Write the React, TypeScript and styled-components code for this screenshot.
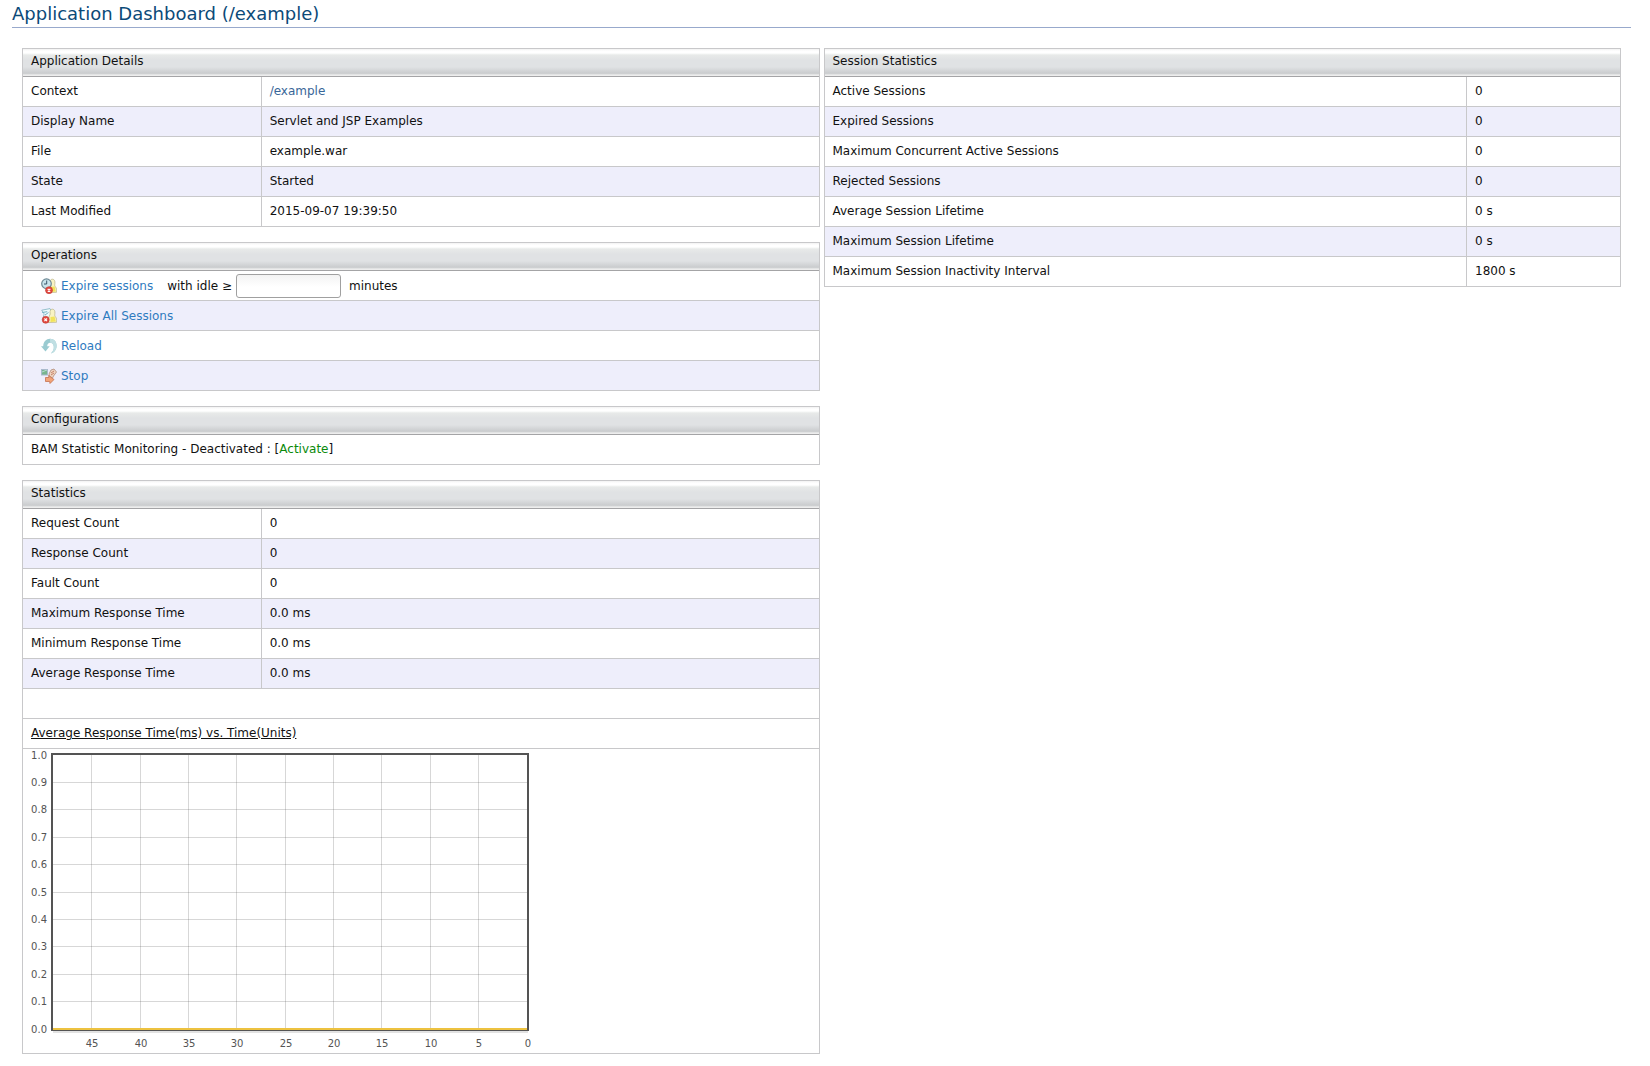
import React from "react";
import styled, { createGlobalStyle } from "styled-components";

const GlobalStyle = createGlobalStyle`
  body {
    margin: 0;
    background: #fff;
    color: #111;
    font-family: "DejaVu Sans", Verdana, sans-serif;
    font-size: 12px;
    line-height: 14px;
  }
`;

const Page = styled.main`
  padding: 0 19px 12px 12px;
`;

const Title = styled.h2`
  margin: 0;
  padding: 3px 0 2px;
  border-bottom: 1px solid #98a9cc;
  color: #0b4a78;
  font-size: 18px;
  font-weight: normal;
  line-height: 22px;
`;

const Columns = styled.div`
  display: grid;
  grid-template-columns: 1fr 1fr;
  gap: 4px;
  align-items: start;
  padding: 20px 10px 0;
`;

const Stack = styled.div`
  display: flex;
  flex-direction: column;
  gap: 15px;
`;

const Table = styled.table`
  width: 100%;
  border: 1px solid #c8c8ca;
  border-spacing: 0;
  table-layout: fixed;
`;

const Col = styled.col<{ $width?: string }>`
  width: ${(p) => p.$width ?? "auto"};
`;

const Head = styled.th`
  padding: 5px 8px 8px;
  border-bottom: 1px solid #a4a4a6;
  background: linear-gradient(
    #f2f2f2 0, #fff 2px, #fff 4px, #e8eae9 6px, #e0e2e4 11px,
    #e0e2e4 18px, #cbcdcf 24px, #d0d2d3 25px, #f4f4f4 26px, #e6e6e6 27px
  );
  font-weight: normal;
  text-align: left;
`;

const Row = styled.tr<{ $shaded?: boolean }>`
  background: ${(p) => (p.$shaded ? "#eeeefb" : "#fff")};

  &:last-child > td {
    border-bottom: 0;
  }
`;

const Cell = styled.td<{ $divided?: boolean }>`
  height: 14px;
  padding: 7px 8px 8px;
  border-bottom: 1px solid #c8c8ca;
  border-right: ${(p) => (p.$divided ? "1px solid #c8c8ca" : "0")};
`;

const ToolCell = styled(Cell)`
  height: 29px;
  padding: 0 18px;
`;

const ChartCell = styled(Cell)`
  padding: 0 8px;
`;

const Tools = styled.div`
  display: flex;
  align-items: center;
  gap: 14px;
`;

const IdleGroup = styled.div`
  display: flex;
  align-items: center;
  gap: 8px;
`;

const ToolLink = styled.a`
  display: flex;
  align-items: center;
  gap: 4px;
  color: #2f7bbf;
  text-decoration: none;
`;

const ContextLink = styled.a`
  color: #386698;
  text-decoration: none;
`;

const ActivateLink = styled.a`
  color: #0b8a0b;
  text-decoration: none;
`;

const IdleField = styled.label`
  display: flex;
  align-items: center;
  gap: 4px;
`;

const IdleInput = styled.input`
  box-sizing: border-box;
  width: 105px;
  height: 24px;
  padding: 2px 4px;
  border: 1px solid #a0a0a0;
  border-radius: 3px;
  background: linear-gradient(#f3f3f3, #fff 12px);
  font: inherit;
`;

const Icon = styled.svg`
  display: block;
  width: 16px;
  height: 16px;
`;

const ChartTitle = styled.span`
  text-decoration: underline;
`;

const Chart = styled.svg`
  display: block;
  width: 500px;
  height: 304px;
  font-size: 10px;
`;

const Person = () => (
  <>
    <path d="M11.500 1.200c-2 0-2.800 1.600-2.400 4 .2 1.200-.4 2-1 3.300L7.500 14.500l8-.2c.5-1.700 0-4.600-1.200-5.700-.7-.7-.6-1.600-.4-3 .300-2.800-.7-4.400-2.400-4.400z" fill="#f8f3c4" stroke="#b8b083" strokeWidth=".7" />
    <path d="M9.500 9l4-.5 1.300 5-5.300.600z" fill="#f2e35a" />
  </>
);

const ErrorBadge = ({ x, y }: { x: number; y: number }) => (
  <g>
    <circle cx={x} cy={y} r="3.500" fill="#e2473f" stroke="#c03a33" strokeWidth=".6" />
    <path d={`M${x - 1.3} ${y - 1.3}l2.600 2.600m0-2.600l-2.600 2.600`} stroke="#fff" strokeWidth="1.100" />
  </g>
);

const ExpireIcon = () => (
  <Icon viewBox="0 0 16 16" aria-hidden="true">
    <Person />
    <circle cx="5.500" cy="5.700" r="4.800" fill="#c8e4ec" stroke="#6c8894" strokeWidth="1.200" />
    <path d="M5.700 2.500v3.500H3" fill="none" stroke="#39566a" />
    <ErrorBadge x={8} y={12.2} />
  </Icon>
);

const ExpireAllIcon = () => (
  <Icon viewBox="0 0 16 16" aria-hidden="true">
    <path d="M.7 2.200L9 .6l1.600 3-3 8.900-6-.5 1.600-6z" fill="#eef9fb" stroke="#7fb2c0" strokeWidth=".8" />
    <path d="M1.200 4.500l5-.8M4 7l3.500-2.500" stroke="#63a9be" strokeWidth=".9" />
    <Person />
    <ErrorBadge x={4.7} y={11.8} />
  </Icon>
);

const ReloadIcon = () => (
  <Icon viewBox="0 0 16 16" aria-hidden="true">
    <path d="M0 8.200h2.200C2.500 3.500 5.200.7 9 .7c4.200 0 6.600 3 6.600 7 0 3.800-2.300 6.800-5.800 7.800 2-1.700 3.200-4 3-6.700-.2-2.500-1.600-4-3.700-4-1.700 0-2.800 1.200-2.900 3.400h2.500L4.500 13.500z" fill="#9acbd1" />
    <path d="M9 .7c4.200 0 6.600 3 6.600 7 0 3.800-2.300 6.800-5.800 7.800 2-1.700 3.200-4 3-6.700-.2-2.500-1.600-4-3.700-4z" fill="#c0dfe3" />
  </Icon>
);

const StopIcon = () => (
  <Icon viewBox="0 0 16 16" aria-hidden="true">
    <rect x=".5" y="1.500" width="6" height="5.500" fill="#78b58d" stroke="#a9b9cc" />
    <path d="M1 4l5-2" stroke="#b4dcd0" />
    <path d="M8 6l2-4 3-1 2.500 3-3 4-1 2-3-2z" fill="#f0d5c2" stroke="#b08c78" strokeWidth=".8" />
    <path d="M10 5l3-2M10 7l3-2" stroke="#b96d51" strokeWidth=".8" />
    <path d="M4.500 9.500H8L7.500 7.500l5.500 4-4 4-.3-2H4.500z" fill="#f2a478" stroke="#c4714f" strokeWidth=".8" />
  </Icon>
);

type Pair = [string, React.ReactNode];

const details: Pair[] = [
  ["Context", <ContextLink href="#example">/example</ContextLink>],
  ["Display Name", "Servlet and JSP Examples"],
  ["File", "example.war"],
  ["State", "Started"],
  ["Last Modified", "2015-09-07 19:39:50"],
];

const sessions: Pair[] = [
  ["Active Sessions", "0"],
  ["Expired Sessions", "0"],
  ["Maximum Concurrent Active Sessions", "0"],
  ["Rejected Sessions", "0"],
  ["Average Session Lifetime", "0 s"],
  ["Maximum Session Lifetime", "0 s"],
  ["Maximum Session Inactivity Interval", "1800 s"],
];

const statistics: Pair[] = [
  ["Request Count", "0"],
  ["Response Count", "0"],
  ["Fault Count", "0"],
  ["Maximum Response Time", "0.0 ms"],
  ["Minimum Response Time", "0.0 ms"],
  ["Average Response Time", "0.0 ms"],
];

interface PairTableProps {
  title: string;
  rows: Pair[];
  labelWidth?: string;
  valueWidth?: string;
  children?: React.ReactNode;
}

const PairTable = ({ title, rows, labelWidth, valueWidth, children }: PairTableProps) => (
  <Table>
    <colgroup>
      <Col $width={labelWidth} />
      <Col $width={valueWidth} />
    </colgroup>
    <thead>
      <tr>
        <Head colSpan={2}>{title}</Head>
      </tr>
    </thead>
    <tbody>
      {rows.map(([label, value], i) => (
        <Row key={label} $shaded={i % 2 === 1}>
          <Cell $divided>{label}</Cell>
          <Cell>{value}</Cell>
        </Row>
      ))}
      {children}
    </tbody>
  </Table>
);

const PLOT = { left: 22, right: 496, top: 6, bottom: 280 };
const yTicks = Array.from({ length: 11 }, (_, i) => i / 10);
const xTicks = Array.from({ length: 10 }, (_, i) => i * 5);
const yAt = (v: number) => Math.floor(PLOT.bottom - v * (PLOT.bottom - PLOT.top));
const xAt = (v: number) => Math.floor(PLOT.right - (v * (PLOT.right - PLOT.left)) / 49);

const ResponseChart = () => (
  <Chart viewBox="0 0 500 304" role="img" aria-label="Average response time over time">
    <g fill="#545454" fillOpacity="0.23" shapeRendering="crispEdges">
      {yTicks.slice(1, -1).map((v) => (
        <rect key={v} x={PLOT.left} y={yAt(v)} width={PLOT.right - PLOT.left} height="1" />
      ))}
      {xTicks.slice(1).map((v) => (
        <rect key={v} x={xAt(v)} y={PLOT.top} width="1" height={PLOT.bottom - PLOT.top} />
      ))}
    </g>
    <rect x="21" y="5" width="476" height="276" fill="none" stroke="#545454" strokeWidth="2" />
    <rect x="22" y="282" width="475" height="2" fill="#e2e2e2" />
    <rect x="22" y="279" width="474" height="2" fill="#edc240" />
    <g fill="#545454">
      {yTicks.map((v) => (
        <text key={v} x="16" y={yAt(v) + 4} textAnchor="end">{v.toFixed(1)}</text>
      ))}
      {xTicks.map((v) => (
        <text key={v} x={xAt(v) + 1} y="298" textAnchor="middle">{v}</text>
      ))}
    </g>
  </Chart>
);

export default function App() {
  return (
    <>
      <GlobalStyle />
      <Page>
        <Title>Application Dashboard (/example)</Title>
        <Columns>
          <Stack>
            <PairTable title="Application Details" rows={details} labelWidth="30%" />
            <Table>
              <thead>
                <tr>
                  <Head>Operations</Head>
                </tr>
              </thead>
              <tbody>
                <Row>
                  <ToolCell>
                    <Tools>
                      <ToolLink href="#expire"><ExpireIcon />Expire sessions</ToolLink>
                      <IdleGroup>
                        <IdleField htmlFor="idle">
                          with idle ≥
                          <IdleInput id="idle" type="text" />
                        </IdleField>
                        <span>minutes</span>
                      </IdleGroup>
                    </Tools>
                  </ToolCell>
                </Row>
                <Row $shaded>
                  <ToolCell>
                    <Tools>
                      <ToolLink href="#expire-all"><ExpireAllIcon />Expire All Sessions</ToolLink>
                    </Tools>
                  </ToolCell>
                </Row>
                <Row>
                  <ToolCell>
                    <Tools>
                      <ToolLink href="#reload"><ReloadIcon />Reload</ToolLink>
                    </Tools>
                  </ToolCell>
                </Row>
                <Row $shaded>
                  <ToolCell>
                    <Tools>
                      <ToolLink href="#stop"><StopIcon />Stop</ToolLink>
                    </Tools>
                  </ToolCell>
                </Row>
              </tbody>
            </Table>
            <Table>
              <thead>
                <tr>
                  <Head>Configurations</Head>
                </tr>
              </thead>
              <tbody>
                <Row>
                  <Cell>
                    BAM Statistic Monitoring - Deactivated : [<ActivateLink href="#activate">Activate</ActivateLink>]
                  </Cell>
                </Row>
              </tbody>
            </Table>
            <PairTable title="Statistics" rows={statistics} labelWidth="30%">
              <Row>
                <Cell colSpan={2} />
              </Row>
              <Row>
                <Cell colSpan={2}>
                  <ChartTitle>Average Response Time(ms) vs. Time(Units)</ChartTitle>
                </Cell>
              </Row>
              <Row>
                <ChartCell colSpan={2}>
                  <ResponseChart />
                </ChartCell>
              </Row>
            </PairTable>
          </Stack>
          <PairTable title="Session Statistics" rows={sessions} valueWidth="153px" />
        </Columns>
      </Page>
    </>
  );
}
